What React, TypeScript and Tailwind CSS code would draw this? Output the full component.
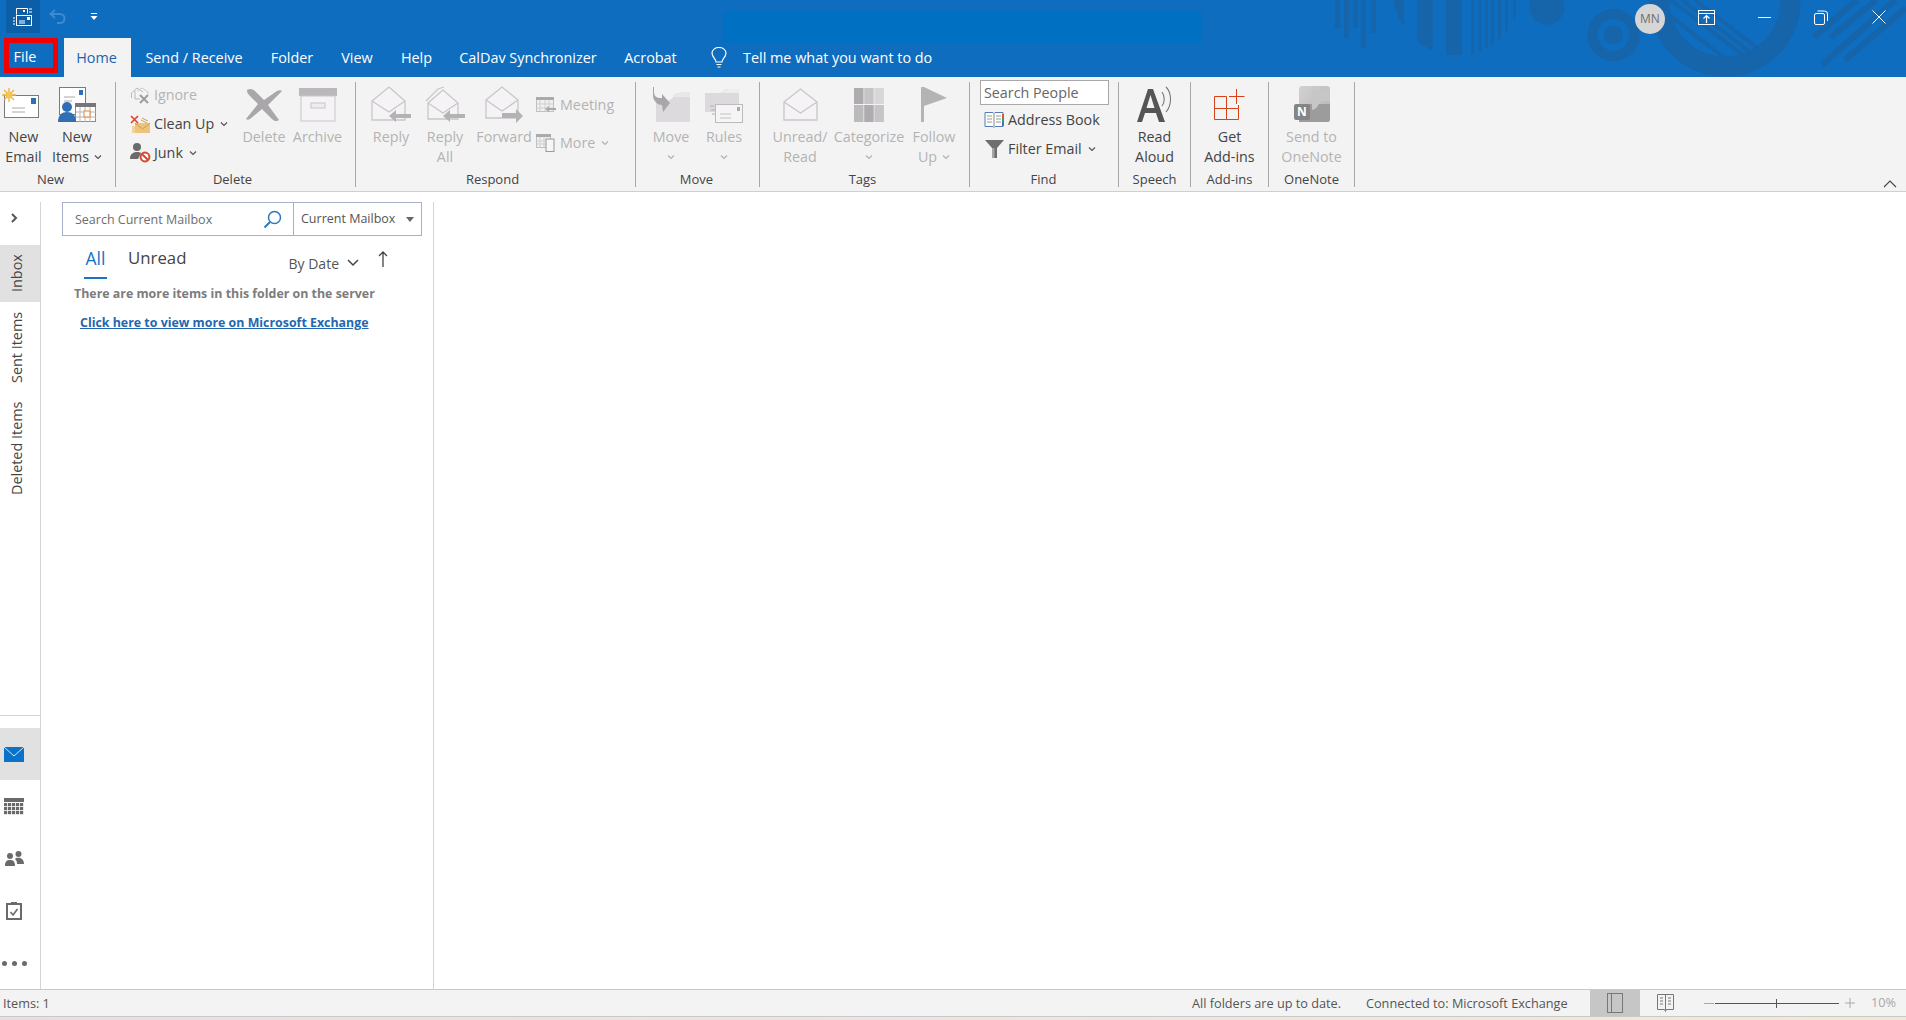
import React from "react";

const FONT = "font-['Open_Sans','Noto_Sans',sans-serif]";

const Chev = ({ c = "#555", className = "" }: { c?: string; className?: string }) => (
  <svg width="8" height="6" viewBox="0 0 8 6" className={className}>
    <path d="M1 1.5 L4 4.5 L7 1.5" fill="none" stroke={c} strokeWidth="1.2" />
  </svg>
);

const L = "#f5f3f6";
const E = "#c9c6ca";

const NewEmail = () => (
  <svg width="38" height="33" viewBox="0 0 38 33" className="-ml-[5px]">
    <rect x="2.5" y="7.5" width="34" height="22" fill="#fff" stroke="#7b7b7b" />
    <rect x="29" y="10" width="5" height="6" fill="#2f6fb5" />
    <path d="M10 20h13M10 24h13" stroke="#a9a9a9" />
    <path d="M7 0v14M0 7h14M2 2l10 10M12 2L2 12" stroke="#eeb13f" strokeWidth="1.3" />
    <circle cx="7" cy="7" r="3.500" fill="#f5c34e" />
  </svg>
);
const NewItems = () => (
  <svg width="38" height="38" viewBox="0 0 38 38">
    <rect x="1.5" y="1.5" width="26" height="27" fill="#fff" stroke="#7b7b7b" />
    <rect x="21" y="4" width="4" height="5" fill="#2f6fb5" />
    <path d="M6 11h11M6 15h8" stroke="#a9a9a9" />
    <rect x="17.5" y="17.5" width="20" height="18" fill="#fff" stroke="#8b8b8b" />
    <rect x="17" y="17" width="21" height="4" fill="#777" />
    <path d="M22 21v15M27 21v15M32 21v15M18 26h20M18 31h20" stroke="#b5b5b5" />
    <rect x="26" y="25" width="6" height="6" fill="#fff" stroke="#e8832e" />
    <circle cx="9" cy="21" r="5" fill="#2f6fb5" />
    <path d="M0 36c0-7 4-10 9-10s9 3 9 10z" fill="#2f6fb5" />
  </svg>
);
const Ignore = () => (
  <svg width="21" height="19" viewBox="0 0 21 19">
    <path d="M1.5 8L7 3l6 4M1.5 8v5M5 6v8h5" fill="none" stroke="#b9b9b9" />
    <path d="M7 6l5-3 6 4v2" fill="none" stroke="#c9c9c9" />
    <path d="M10 10l8 8M18 10l-8 8" stroke="#9d9d9d" strokeWidth="2" />
  </svg>
);
const CleanUp = () => (
  <svg width="20" height="18" viewBox="0 0 20 18">
    <path d="M5 8h15v10H5z" fill="#eec47c" />
    <path d="M5 8l7.5 6L20 8" fill="none" stroke="#d79a3f" />
    <path d="M2 11h3v7H2z" fill="#f2d39b" />
    <path d="M1 1l7 7M8 1L1 8" stroke="#d9442a" strokeWidth="1.6" />
    <path d="M12 3l6 3M11 5l6 3" stroke="#c9a05f" />
  </svg>
);
const Junk = () => (
  <svg width="21" height="21" viewBox="0 0 21 21">
    <circle cx="7" cy="5" r="4" fill="#6b6b6b" />
    <path d="M0 17c0-5 3-7 7-7 2 0 3 .4 4 1l-3 6z" fill="#6b6b6b" />
    <circle cx="15" cy="15" r="4.4" fill="#fff" stroke="#d5482e" strokeWidth="2" />
    <path d="M12 12l6 6" stroke="#d5482e" strokeWidth="2" />
  </svg>
);
const DeleteX = () => (
  <svg width="38" height="34" viewBox="0 0 38 34">
    <path d="M2 2c3-2 6-1 8 1l9 9 13-9c2-1 4-1 5 0L23 17l11 15c-2 2-5 1-7-1L17 21 5 31c-2 1-3 1-4 0L13 16 4 7C2 5 2 3 2 2z" fill="#a9a7a9" />
  </svg>
);
const Archive = () => (
  <svg width="38" height="34" viewBox="0 0 38 34">
    <rect x="0" y="0" width="38" height="8" fill="#bab8ba" />
    <rect x="2" y="8" width="34" height="25" fill={L} stroke={E} />
    <rect x="12" y="15" width="14" height="5" fill="#eeecef" stroke={E} />
  </svg>
);
const Envelope = ({ w = 35, h = 33 }: { w?: number; h?: number }) => (
  <svg width={w} height={h} viewBox="0 0 35 33">
    <path d="M1 14L17.5 1 34 14v18H1z" fill={L} stroke={E} strokeWidth="1.3" />
    <path d="M1 14l16.5 11L34 14" fill="none" stroke={E} strokeWidth="1.3" />
  </svg>
);
const Reply = ({ all = false }: { all?: boolean }) => (
  <svg width="40" height="38" viewBox="0 0 40 38">
    {all && <path d="M1 15L13 3l6-2" fill="none" stroke={E} strokeWidth="1.2" />}
    <path d={all ? "M3 17L18 4l15 13v16H3z" : "M1 15L18 1l16 14v19H1z"} fill={L} stroke={E} strokeWidth="1.3" />
    <path d={all ? "M3 17l15 10 15-10" : "M1 15l17 11 16-11"} fill="none" stroke={E} strokeWidth="1.3" />
    <path d="M18 30l7-6v4h15v4H25v4z" fill="#b4b2b4" />
  </svg>
);
const Forward = () => (
  <svg width="38" height="37" viewBox="0 0 38 37">
    <path d="M1 14L17 1l16 13v18H1z" fill={L} stroke={E} strokeWidth="1.3" />
    <path d="M1 14l16 11 16-11" fill="none" stroke={E} strokeWidth="1.3" />
    <path d="M38 30l-7-7v4H17v5h14v5z" fill="#b4b2b4" />
  </svg>
);
const Meeting = () => (
  <svg width="20" height="17" viewBox="0 0 20 17">
    <rect x=".5" y=".5" width="17" height="14" fill="#f1f0f1" stroke="#c1c1c1" />
    <rect x="0" y="0" width="18" height="3" fill="#aaa" />
    <path d="M4 3v11M9 3v11M13 3v11M1 7h16M1 11h16" stroke="#cfcfcf" />
    <path d="M9 12l4-3v2h7v2h-7v2z" fill="#a9a9a9" />
  </svg>
);
const More = () => (
  <svg width="19" height="18" viewBox="0 0 19 18">
    <rect x=".5" y=".5" width="14" height="13" fill="#f1f0f1" stroke="#c1c1c1" />
    <rect x="0" y="0" width="15" height="3" fill="#aaa" />
    <path d="M4 3v10M8 3v10M1 7h13M1 10h13" stroke="#cfcfcf" />
    <rect x="10" y="5" width="8" height="12.5" fill="#f6f6f6" stroke="#9a9a9a" />
  </svg>
);
const Move = () => (
  <svg width="37" height="36" viewBox="0 0 37 36">
    <path d="M3 35V14h12l5-3V8l9-3h8v30z" fill="#dcdadc" />
    <path d="M20 8l9-3h8v5H20z" fill="#e9e8e9" />
    <path d="M1 0v5c0 6 5 6 8 6v-4l8 9-7 9-1-7c-5 0-9-5-9-9V0z" fill="#a8a6a8" />
  </svg>
);
const Rules = () => (
  <svg width="38" height="36" viewBox="0 0 38 36">
    <path d="M0 30V6h16l6-4h12v23H0z" fill="#dcdadc" />
    <path d="M17 6l6-4h11v4z" fill="#efeeef" />
    <rect x="10.5" y="17.5" width="27" height="18" fill="#f6f5f6" stroke="#bbb" />
    <rect x="32" y="20" width="3" height="4" fill="#aaa" />
    <path d="M15 27h11M15 31h11" stroke="#c2c2c2" />
    <path d="M5 19h4M6 23h4M7 27h3" stroke="#b0b0b0" />
  </svg>
);
const Categorize = () => (
  <svg width="30" height="34" viewBox="0 0 30 34">
    <rect x="0" y="0" width="9.5" height="16" fill="#aeacae" />
    <rect x="10.2" y="0" width="9.5" height="16" fill="#c6c4c6" />
    <rect x="20.4" y="0" width="9.5" height="16" fill="#d8d6d8" />
    <rect x="0" y="17" width="9.5" height="17" fill="#bcbabc" />
    <rect x="10.2" y="17" width="9.5" height="17" fill="#aeacae" />
    <rect x="20.4" y="17" width="9.5" height="17" fill="#c6c4c6" />
  </svg>
);
const Flag = () => (
  <svg width="26" height="35" viewBox="0 0 26 35">
    <rect x="0" y="0" width="3" height="35" fill="#b5b3b5" />
    <path d="M3 0l23 11L3 19z" fill="#b5b3b5" />
  </svg>
);
const AddressBook = () => (
  <svg width="20" height="18" viewBox="0 0 20 18">
    <path d="M1 1.5h8l1 1 1-1h8v14h-8l-1 1-1-1H1z" fill="#fff" stroke="#557db3" />
    <path d="M10 2.5v13" stroke="#888" />
    <path d="M3 5h5M3 8h5M3 11h5M12 5h5M12 8h5M12 11h5" stroke="#999" />
    <rect x="18" y="3" width="2" height="4" fill="#d9553a" />
    <rect x="18" y="7" width="2" height="4" fill="#3d9a57" />
    <rect x="18" y="11" width="2" height="4" fill="#3a76c0" />
  </svg>
);
const Filter = () => (
  <svg width="19" height="18" viewBox="0 0 19 18">
    <path d="M0 0h19l-7 8v10H7V8z" fill="#6e6e6e" />
    <path d="M7 8v10h2.5V8z" fill="#a6a6a6" />
  </svg>
);
const ReadAloud = () => (
  <svg width="38" height="38" viewBox="0 0 38 38">
    <path d="M12 3h5l12 33h-6l-3-9H9l-3 9H1zM10.500 22h8L14.500 9z" fill="#555" fillRule="evenodd" />
    <path d="M26 6c3 4 3 10 0 14M30 1c6 6 6 18 0 25" fill="none" stroke="#777" strokeWidth="1.1" />
  </svg>
);
const GetAddins = () => (
  <svg width="31" height="31" viewBox="0 0 31 31">
    <path d="M.5 7.500h12v12H.5zM12.500 19.500h12v11h-12zM.5 19.500v11h12" fill="none" stroke="#d8421a" strokeWidth="1" />
    <path d="M24.500 16v3.500M15 7.500h15.500M22.500 0v15" fill="none" stroke="#d8421a" strokeWidth="1" />
  </svg>
);
const OneNote = () => (
  <svg width="36" height="37" viewBox="0 0 36 37">
    <defs>
      <linearGradient id="on" x1="0" y1="0" x2="1" y2="1">
        <stop offset="0" stopColor="#d2d2d2" />
        <stop offset="1" stopColor="#b4b4b4" />
      </linearGradient>
    </defs>
    <rect x="5" y="0" width="31" height="36" rx="3" fill="url(#on)" />
    <path d="M5 36h28a3 3 0 0 0 3-3V18H5z" fill="#9c9c9c" />
    <path d="M18 24c6 0 6-9 12-9h6V4H18z" fill="#c6c6c6" />
    <rect x="0" y="18" width="16" height="16" rx="2" fill="#858585" />
    <text x="8" y="30" textAnchor="middle" fontSize="12" fontWeight="700" fill="#fff" fontFamily="Open Sans">N</text>
  </svg>
);

const Big = ({
  w,
  icon,
  l1,
  l2,
  dis = false,
  chev = false,
}: {
  w: string;
  icon: React.ReactNode;
  l1: string;
  l2?: string;
  dis?: boolean;
  chev?: boolean;
}) => (
  <div className={`${w} flex flex-col items-center shrink-0 text-[14.3px] leading-[20px] whitespace-nowrap ${dis ? "text-[#b3b3b3]" : "text-[#444]"}`}>
    <div className="h-[45px] flex items-center justify-center">{icon}</div>
    <div className="h-[20px]">{l1}</div>
    <div className="h-[20px] flex items-center gap-[5px]">
      {l2}
      {chev && <Chev c={dis ? "#b3b3b3" : "#555"} />}
    </div>
  </div>
);

const Small = ({
  icon,
  label,
  dis = false,
  chev = false,
  h = "h-[29px]",
  iw = "w-[24px]",
}: {
  icon: React.ReactNode;
  label: string;
  dis?: boolean;
  chev?: boolean;
  h?: string;
  iw?: string;
}) => (
  <div className={`flex items-center text-[14.3px] whitespace-nowrap ${h} ${dis ? "text-[#b3b3b3]" : "text-[#444]"}`}>
    <span className={`${iw} flex items-center shrink-0`}>{icon}</span>
    {label}
    {chev && <Chev c={dis ? "#b3b3b3" : "#555"} className="ml-[6px]" />}
  </div>
);

const Group = ({
  w,
  label,
  children,
  labelClass = "",
}: {
  w: string;
  label: string;
  children: React.ReactNode;
  labelClass?: string;
}) => (
  <div className={`${w} h-[105px] shrink-0 flex flex-col border-r border-[#a8a8a8]`}>
    <div className="h-[92px] flex">{children}</div>
    <div className={`h-[15px] flex items-center justify-center text-[13px] text-[#444] whitespace-nowrap ${labelClass}`}>{label}</div>
  </div>
);

const Tab = ({ w, t }: { w: string; t: string }) => (
  <div className={`${w} h-full flex items-center justify-center text-white text-[14.4px] whitespace-nowrap`}>{t}</div>
);

const Decoration = () => (
  <svg className="absolute left-0 top-0" width="1906" height="77" viewBox="0 0 1906 77">
    <defs>
      <clipPath id="half">
        <circle cx="1457" cy="-9" r="64" />
      </clipPath>
      <clipPath id="inner">
        <circle cx="1725" cy="1" r="56" />
      </clipPath>
    </defs>
    <g fill="#1664a9">
      <rect x="1335" y="0" width="5" height="28" />
      <rect x="1344" y="0" width="5" height="38" />
      <rect x="1353" y="0" width="5" height="28" />
      <rect x="1361" y="0" width="5" height="48" />
      <rect x="1371" y="0" width="5" height="33" />
      <g clipPath="url(#half)">
        <rect x="1393" y="0" width="11" height="60" />
        <rect x="1417" y="0" width="16" height="60" />
        <rect x="1446" y="0" width="16" height="60" />
        <rect x="1471" y="0" width="3" height="60" />
        <rect x="1479" y="0" width="3" height="60" />
        <rect x="1485" y="0" width="3" height="60" />
        <rect x="1491" y="0" width="3" height="60" />
        <rect x="1498" y="0" width="3" height="60" />
        <rect x="1505" y="0" width="3" height="60" />
        <rect x="1513" y="0" width="3" height="60" />
      </g>
      <circle cx="1547" cy="7" r="17.500" />
      <circle cx="1613.500" cy="35" r="9.500" />
    </g>
    <circle cx="1613.500" cy="35" r="21" fill="none" stroke="#1664a9" strokeWidth="10" />
    <circle cx="1725" cy="1" r="65.500" fill="none" stroke="#1664a9" strokeWidth="20" />
    <g clipPath="url(#inner)" stroke="#1664a9" strokeWidth="4">
      <path d="M1671 0l81 62M1682 0l81 62M1660 8l70 54M1695 0l70 54" />
    </g>
    <g stroke="#1664a9" strokeWidth="6">
      <path d="M1814 37l43-37M1831 37l45-37M1822 65l73-65M1845 60l61-52" />
    </g>
  </svg>
);

const TitleControls = () => (
  <div className="relative ml-auto flex items-center h-[38px]">
    <div className="w-[30px] h-[30px] rounded-full bg-[#d6d6d6] flex items-center justify-center text-[12px] text-[#6e6e6e] mr-[13px]">MN</div>
    <div className="w-[57px] h-[34px] mb-[4px] flex items-center justify-center">
      <svg width="17" height="15" viewBox="0 0 17 15">
        <rect x=".5" y=".5" width="16" height="14" fill="none" stroke="#fff" />
        <path d="M1 3.500h15" stroke="#fff" />
        <path d="M8.500 13V6M5.500 8.500l3-3 3 3" fill="none" stroke="#fff" strokeWidth="1.2" />
      </svg>
    </div>
    <div className="w-[57px] h-[34px] mb-[4px] flex items-center justify-center pl-[1px]">
      <svg width="13" height="3" viewBox="0 0 13 3"><path d="M0 1.500h13" stroke="#fff" /></svg>
    </div>
    <div className="w-[57px] h-[34px] mb-[4px] flex items-center justify-center">
      <svg width="14" height="15" viewBox="0 0 14 15">
        <rect x=".5" y="3.500" width="10" height="11" rx="1.500" fill="none" stroke="#fff" />
        <path d="M3.500 1h7a3 3 0 0 1 3 3v7" fill="none" stroke="#fff" />
      </svg>
    </div>
    <div className="w-[57px] h-[34px] mb-[4px] flex items-center justify-center pl-[3px]">
      <svg width="14" height="14" viewBox="0 0 14 14"><path d="M.5.5l13 13M13.500.5l-13 13" stroke="#fff" /></svg>
    </div>
  </div>
);

const Header = () => (
  <div className="relative w-full h-[77px] bg-[#0f6dbf] shrink-0 overflow-hidden">
    <Decoration />
    <div className="absolute left-[723px] top-[11px] w-[479px] h-[32px] bg-[#0070c2]" />
    <div className="relative flex h-[38px]">
      <div className="ml-[6px] w-[34px] h-[33px] bg-[#0c5ea6] flex items-center justify-center">
        <svg width="20" height="20" viewBox="0 0 20 20" fill="none" stroke="#fff">
          <path d="M3.500 7.500v-6h11v5" />
          <path d="M16 2h3M16 5h3M0 11h2M0 14h2M0 17h2" />
          <rect x="3.500" y="8.500" width="15" height="10" />
          <path d="M6 14h6M6 16h6" />
          <rect x="14" y="10" width="3" height="3" fill="#fff" stroke="none" />
          <rect x="10" y="3" width="2" height="2" fill="#fff" stroke="none" />
        </svg>
      </div>
      <div className="ml-[9px] mt-[9px] h-[15px]">
        <svg width="18" height="15" viewBox="0 0 18 15" fill="none">
          <path d="M6 1L1.500 5 6 9" stroke="#3d8ad0" strokeWidth="2" />
          <path d="M2 5h9a4.500 4.500 0 0 1 0 9H8" stroke="#3d8ad0" strokeWidth="2" />
        </svg>
      </div>
      <div className="ml-[23px] mt-[13px]">
        <svg width="8" height="9" viewBox="0 0 8 9">
          <path d="M1 .5h6" stroke="#fff" />
          <path d="M.5 3h7L4 7z" fill="#fff" />
        </svg>
      </div>
      <TitleControls />
    </div>
    <div className="relative flex h-[39px] items-stretch">
      <div className="ml-[4px] mb-[4px] w-[54px] border-[5px] border-[#f00000] flex items-center justify-center text-white text-[14.4px] pr-[12px] pt-[3px]">File</div>
      <div className="ml-[6px] w-[67px] bg-[#f3f3f3] flex items-center justify-center text-[#1a64ae] text-[14.4px] pr-[2px]">Home</div>
      <Tab w="w-[126px]" t="Send / Receive" />
      <Tab w="w-[70px]" t="Folder" />
      <Tab w="w-[60px]" t="View" />
      <Tab w="w-[59px]" t="Help" />
      <Tab w="w-[164px]" t="CalDav Synchronizer" />
      <Tab w="w-[81px]" t="Acrobat" />
      <div className="ml-[20px] flex items-center text-white text-[14.4px]">
        <svg width="16" height="21" viewBox="0 0 16 21" fill="none" stroke="#fff" strokeWidth="1.200">
          <path d="M5 15c0-3-4-5-4-9a7 5.500 0 0 1 14 0c0 4-4 6-4 9z" />
          <path d="M5.500 17.500h5M6.500 20h3" />
        </svg>
        <span className="ml-[16px] whitespace-nowrap">Tell me what you want to do</span>
      </div>
    </div>
  </div>
);

const Ribbon = () => (
  <div className="relative w-full h-[115px] bg-[#f3f3f3] border-b border-[#d0d0d0] shrink-0 flex py-[5px]">
    <Group w="w-[116px]" label="New" labelClass="pr-[14px]">
      <Big w="w-[47px]" icon={<NewEmail />} l1="New" l2="Email" />
      <Big w="w-[60px]" icon={<NewItems />} l1="New" l2="Items" chev />
    </Group>
    <Group w="w-[240px]" label="Delete" labelClass="pr-[6px]">
      <div className="ml-[14px] -mt-[2px] w-[109px] flex flex-col">
        <Small icon={<Ignore />} label="Ignore" dis />
        <Small icon={<CleanUp />} label="Clean Up" chev />
        <Small icon={<Junk />} label="Junk" chev />
      </div>
      <Big w="w-[50px]" icon={<DeleteX />} l1="Delete" dis />
      <Big w="w-[57px]" icon={<Archive />} l1="Archive" dis />
    </Group>
    <Group w="w-[280px]" label="Respond" labelClass="pr-[6px]">
      <Big w="w-[50px] ml-[10px]" icon={<Reply />} l1="Reply" dis />
      <Big w="w-[58px]" icon={<Reply all />} l1="Reply" l2="All" dis />
      <Big w="w-[60px]" icon={<Forward />} l1="Forward" dis />
      <div className="ml-[2px] mt-[4px] flex flex-col">
        <Small h="h-[38px]" icon={<Meeting />} label="Meeting" dis />
        <Small h="h-[38px]" icon={<More />} label="More" dis chev />
      </div>
    </Group>
    <Group w="w-[124px]" label="Move" labelClass="pr-[2px]">
      <Big w="w-[70px]" icon={<Move />} l1="Move" dis chev />
      <Big w="w-[36px]" icon={<Rules />} l1="Rules" dis chev />
    </Group>
    <Group w="w-[210px]" label="Tags" labelClass="pr-[4px]">
      <Big w="w-[72px] ml-[4px]" icon={<Envelope />} l1="Unread/" l2="Read" dis />
      <Big w="w-[66px]" icon={<Categorize />} l1="Categorize" dis chev />
      <Big w="w-[64px]" icon={<Flag />} l1="Follow" l2="Up" dis chev />
    </Group>
    <Group w="w-[149px]" label="Find" labelClass="pr-[1px]">
      <div className="ml-[10px] flex flex-col -mt-[2px]">
        <div className="w-[129px] h-[25px] bg-white border border-[#a8a8a8] px-[3px] pt-[1px] flex items-center text-[14.3px] text-[#666] mb-[1px]">Search People</div>
        <Small h="h-[28px]" iw="w-[28px] pl-[4px]" icon={<AddressBook />} label="Address Book" />
        <Small h="h-[30px]" iw="w-[28px] pl-[5px]" icon={<Filter />} label="Filter Email" chev />
      </div>
    </Group>
    <Group w="w-[72px]" label="Speech">
      <Big w="w-[71px]" icon={<ReadAloud />} l1="Read" l2="Aloud" />
    </Group>
    <Group w="w-[78px]" label="Add-ins">
      <Big w="w-[77px]" icon={<GetAddins />} l1="Get" l2="Add-ins" />
    </Group>
    <Group w="w-[86px]" label="OneNote">
      <Big w="w-[85px]" icon={<OneNote />} l1="Send to" l2="OneNote" dis />
    </Group>
    <svg className="absolute right-[9px] bottom-[3px]" width="14" height="8" viewBox="0 0 14 8">
      <path d="M1 7l6-6 6 6" fill="none" stroke="#444" strokeWidth="1.100" />
    </svg>
  </div>
);

const Vert = ({ t, className = "" }: { t: string; className?: string }) => (
  <div className={`flex items-center justify-center pl-[6px] [writing-mode:vertical-rl] rotate-180 text-[14.4px] text-[#444] whitespace-nowrap ${className}`}>{t}</div>
);

const Sidebar = () => (
  <div className="w-[41px] shrink-0 border-r border-[#d4d4d4] flex flex-col h-[787px]">
    <div className="h-[43px] pl-[11px] pt-[11px]">
      <svg width="7" height="10" viewBox="0 0 7 10"><path d="M1 1l4 4-4 4" fill="none" stroke="#555" strokeWidth="2" /></svg>
    </div>
    <Vert t="Inbox" className="h-[57px] bg-[#e1e1e1]" />
    <Vert t="Sent Items" className="h-[70px] mt-[10px]" />
    <Vert t="Deleted Items" className="h-[94px] mt-[19px]" />
    <div className="flex-1" />
    <div className="h-px bg-[#d4d4d4] mb-[12px]" />
    <div className="h-[52px] bg-[#e1e1e1] flex items-center pl-[4px]">
      <svg width="20" height="15" viewBox="0 0 20 15">
        <rect width="20" height="15" fill="#0a72c8" />
        <path d="M0 0l10 9 10-9" fill="none" stroke="#d6e8f7" strokeWidth="1" />
      </svg>
    </div>
    <div className="h-[53px] flex items-center pl-[4px]">
      <svg width="20" height="17" viewBox="0 0 20 17">
        <rect width="20" height="4" fill="#6a6a6a" />
        <g fill="#6a6a6a">
          {[5, 9, 13].map((y) =>
            [0, 4, 8, 12, 16].map((x) => <rect key={`${x}-${y}`} x={x} y={y} width="3.200" height="3.200" />)
          )}
        </g>
      </svg>
    </div>
    <div className="h-[51px] flex items-center pl-[5px]">
      <svg width="19" height="15" viewBox="0 0 19 15" fill="#6a6a6a">
        <circle cx="5" cy="5" r="3" />
        <circle cx="13.500" cy="3" r="3" />
        <path d="M0 15c0-5 2-6 5-6s5 1 5 6zM11 7c3-1 8 0 8 6h-7c0-3-1-4-2-5z" />
      </svg>
    </div>
    <div className="h-[53px] flex items-center pl-[6px]">
      <svg width="16" height="19" viewBox="0 0 16 19" fill="none">
        <rect x="1" y="3" width="14" height="15" stroke="#6a6a6a" strokeWidth="2" />
        <rect x="5" y="1" width="6" height="3" fill="#6a6a6a" />
        <path d="M4.500 11l2.500 3 4.500-6" stroke="#6a6a6a" strokeWidth="1.600" />
      </svg>
    </div>
    <div className="h-[52px] flex items-center gap-[5px] pl-[2px]">
      <span className="w-[5px] h-[5px] rounded-full bg-[#6a6a6a]" />
      <span className="w-[5px] h-[5px] rounded-full bg-[#6a6a6a]" />
      <span className="w-[5px] h-[5px] rounded-full bg-[#6a6a6a]" />
    </div>
  </div>
);

const FolderPane = () => (
  <div className="w-[393px] shrink-0 border-r border-[#d4d4d4] h-[787px]">
    <div className="ml-[21px] w-[360px] h-[34px] border border-[#a6b0c6] flex items-center">
      <div className="w-[231px] h-full flex items-center pl-[12px] border-r border-[#a6b0c6] relative">
        <span className="text-[12.500px] text-[#6d6d6d] whitespace-nowrap pt-[3px]">Search Current Mailbox</span>
        <svg className="absolute left-[200px] top-[7px]" width="19" height="19" viewBox="0 0 19 19" fill="none">
          <circle cx="11.500" cy="7.500" r="6" stroke="#2e78bd" strokeWidth="1.500" />
          <path d="M7 12l-5.500 5.500" stroke="#2e78bd" strokeWidth="2" />
        </svg>
      </div>
      <div className="flex-1 flex items-center pl-[7px] h-full text-[12.500px] text-[#555] whitespace-nowrap">
        Current Mailbox
        <svg className="ml-[11px]" width="8" height="5" viewBox="0 0 8 5"><path d="M0 0h8L4 5z" fill="#666" /></svg>
      </div>
    </div>
    <div className="relative h-[44px] flex text-[#444]">
      <div className="ml-[43px] w-[23px] h-[43px] border-b-[2px] border-[#1a73c4] flex justify-center pt-[9px] text-[17.500px] leading-[26px] text-[#1373c9]">All</div>
      <div className="ml-[21px] pt-[9px] text-[16.800px] leading-[26px] text-[#444]">Unread</div>
      <div className="ml-auto mr-[74px] flex items-center pt-[10px] text-[14px] text-[#555]">
        By Date
        <svg className="ml-[8px]" width="12" height="8" viewBox="0 0 12 8"><path d="M1 1l5 5 5-5" fill="none" stroke="#444" strokeWidth="1.500" /></svg>
      </div>
      <svg className="absolute left-[337px] top-[15px]" width="10" height="16" viewBox="0 0 10 16">
        <path d="M5 16V1M1 5l4-4 4 4" fill="none" stroke="#444" strokeWidth="1.300" />
      </svg>
    </div>
    <div className="pl-[33px] text-[12.400px] font-bold text-[#7c7c7c] leading-[24px] pt-[2px] whitespace-nowrap">There are more items in this folder on the server</div>
    <div className="pl-[39px] text-[12.400px] font-bold text-[#2367af] underline leading-[24px] pt-[5px] whitespace-nowrap">Click here to view more on Microsoft Exchange</div>
  </div>
);

const StatusBar = () => (
  <div className="w-full h-[28px] shrink-0 bg-[#f3f3f3] border-y border-[#c9c9c9] flex items-center text-[12.700px] text-[#555] whitespace-nowrap">
    <span className="ml-[3px] pt-[2px]">Items: 1</span>
    <span className="ml-auto pt-[2px]">All folders are up to date.</span>
    <span className="ml-[25px] w-[224px] pt-[2px]">Connected to: Microsoft Exchange</span>
    <div className="w-[50px] h-full bg-[#c6c6c6] flex items-center justify-center">
      <svg width="16" height="20" viewBox="0 0 16 20" fill="none" stroke="#777">
        <rect x=".5" y=".5" width="15" height="19" />
        <path d="M4.500 1v18" />
      </svg>
    </div>
    <div className="w-[50px] h-full flex items-center justify-center">
      <svg width="17" height="19" viewBox="0 0 17 19" fill="none" stroke="#777">
        <path d="M.5.5h16v15h-7l-1 2-1-2h-7zM8.500 1v15" />
        <path d="M3 4h3M3 7h3M3 10h3M11 4h3M11 7h3M11 10h3" />
      </svg>
    </div>
    <div className="ml-[14px] w-[10px] h-px bg-[#a8a8a8]" />
    <div className="relative ml-[1px] w-[124px] h-px bg-[#555]">
      <div className="absolute left-[61px] -top-[4px] w-px h-[9px] bg-[#555]" />
    </div>
    <svg className="ml-[6px]" width="10" height="10" viewBox="0 0 10 10"><path d="M5 0v10M0 5h10" stroke="#a8a8a8" /></svg>
    <span className="ml-[16px] text-[#a8a8a8]">10%</span>
    <span className="w-[10px]" />
  </div>
);

export default function App() {
  return (
    <div className={`w-[1906px] h-[1020px] overflow-hidden flex flex-col bg-white ${FONT}`}>
      <Header />
      <Ribbon />
      <div className="flex-1 flex pt-[10px] min-h-0">
        <Sidebar />
        <FolderPane />
      </div>
      <StatusBar />
      <div className="h-[3px] shrink-0 bg-gradient-to-r from-[#e9dfe2] via-[#efe4e0] to-[#f3ead4]" />
    </div>
  );
}
